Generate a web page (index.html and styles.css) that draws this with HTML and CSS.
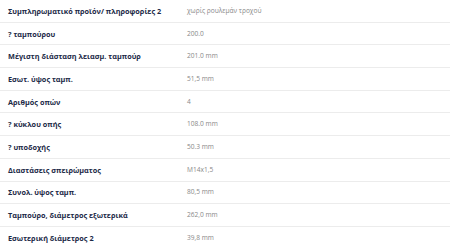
FILE: index.html
```html
<!DOCTYPE html>
<html>
<head>
<meta charset="utf-8">
<link rel="stylesheet" href="styles.css">
</head>
<body>
<table class="specs">
<tbody>
<tr><th>Συμπληρωματικό προϊόν/ πληροφορίες 2</th><td>χωρίς ρουλεμάν τροχού</td></tr>
<tr><th>? ταμπούρου</th><td>200.0</td></tr>
<tr><th>Μέγιστη διάσταση λειασμ. ταμπούρ</th><td>201.0 mm</td></tr>
<tr><th>Εσωτ. ύψος ταμπ.</th><td>51,5 mm</td></tr>
<tr><th>Αριθμός οπών</th><td>4</td></tr>
<tr><th>? κύκλου οπής</th><td>108.0 mm</td></tr>
<tr><th>? υποδοχής</th><td>50.3 mm</td></tr>
<tr><th>Διαστάσεις σπειρώματος</th><td>M14x1,5</td></tr>
<tr><th>Συνολ. ύψος ταμπ.</th><td>80,5 mm</td></tr>
<tr><th>Ταμπούρο, διάμετρος εξωτερικά</th><td>262,0 mm</td></tr>
<tr><th>Εσωτερική διάμετρος 2</th><td>39,8 mm</td></tr>
</tbody>
</table>
</body>
</html>
```
FILE: styles.css
```css
html, body {
  margin: 0;
  padding: 0;
  background: #ffffff;
}
body {
  font-family: "Open Sans", "Noto Sans", sans-serif;
  font-size: 8px;
}
.specs {
  width: 450px;
  border-collapse: collapse;
  table-layout: fixed;
}
.specs tr {
  border-bottom: 1px solid #ececec;
}
.specs th,
.specs td {
  height: 21.7px;
  padding: 0 8px;
  line-height: 12px;
  text-align: left;
  vertical-align: middle;
  white-space: nowrap;
}
.specs th {
  width: 163px;
  font-weight: 700;
  font-size: 7.3px;
  color: #1c2a47;
}
.specs td {
  font-weight: 400;
  font-size: 6.6px;
  color: #888888;
}
```
